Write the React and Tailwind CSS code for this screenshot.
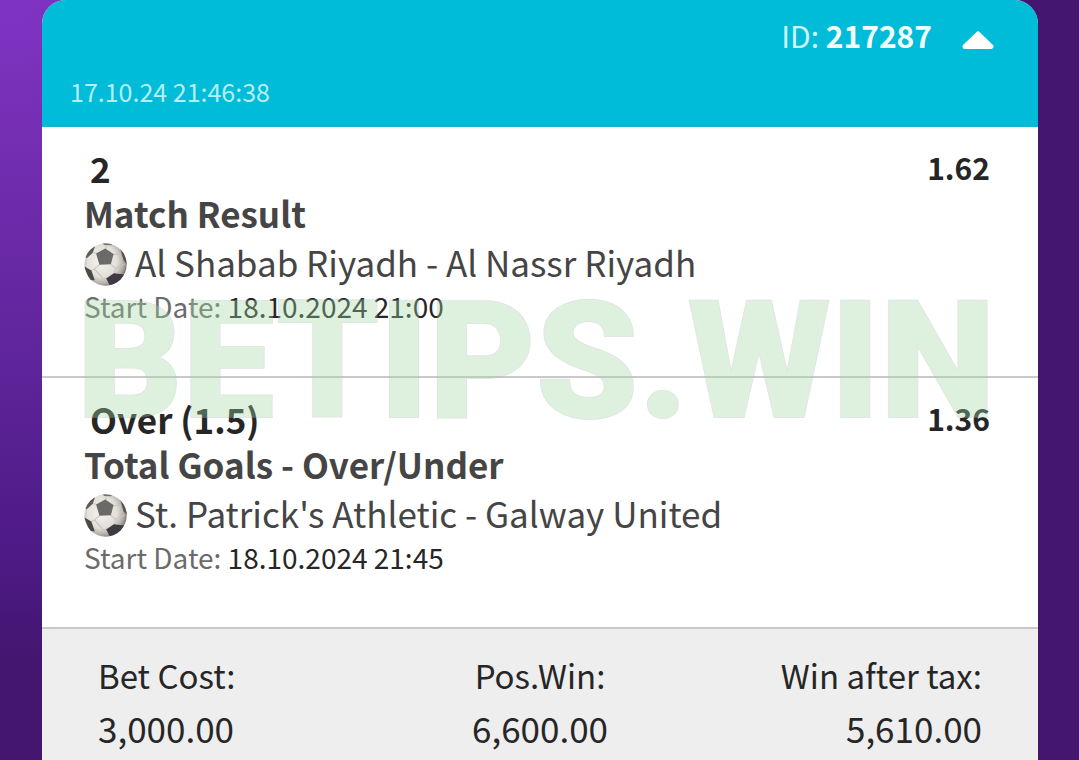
import { useId, useState } from "react";

const bets = [
    {
        pick: "2",
        market: "Match Result",
        teams: "Al Shabab Riyadh - Al Nassr Riyadh",
        startDate: "18.10.2024 21:00",
        odds: "1.62",
    },
    {
        pick: "Over (1.5)",
        market: "Total Goals - Over/Under",
        teams: "St. Patrick's Athletic - Galway United",
        startDate: "18.10.2024 21:45",
        odds: "1.36",
    },
];

const totals = [
    { label: "Bet Cost:", value: "3,000.00", align: "text-left" },
    { label: "Pos.Win:", value: "6,600.00", align: "text-center" },
    { label: "Win after tax:", value: "5,610.00", align: "text-right" },
];

function SoccerBall() {
    const id = useId();

    return (
        <svg className="w-[43px] h-[43px] mb-0.5 shrink-0" viewBox="27 21 128 128" aria-hidden="true">
            <defs>
                <radialGradient id={`${id}-shade`} cx="0.4" cy="0.42" r="0.62">
                    <stop offset="0" stopColor="#f6f4ef" />
                    <stop offset="0.6" stopColor="#e2dfda" />
                    <stop offset="0.85" stopColor="#b3aca6" />
                    <stop offset="1" stopColor="#77706c" />
                </radialGradient>
                <clipPath id={`${id}-clip`}>
                    <circle cx="91" cy="85" r="63" />
                </clipPath>
            </defs>
            <g clipPath={`url(#${id}-clip)`}>
                <rect x="27" y="21" width="128" height="128" fill={`url(#${id}-shade)`} />
                {/* Seams */}
                <g fill="none" stroke="#c9c4bd" strokeWidth="3">
                    <path d="M67 52L52 49M91 41L94 24M111 56L138 53M105 82L120 96L118 114M75 84L58 98L48 104M120 96L148 84M58 98L84 128L98 126M34 64L32 98" />
                </g>
                {/* Patches */}
                <path d="M63 52L90 37L115 54L107 84L73 86Z" fill="#6b6a68" />
                <path d="M24 62L36 38L60 31L53 50L36 66Z" fill="#5e5c55" />
                <path d="M80 19L118 19L108 28L87 27Z" fill="#77756f" />
                <path d="M27 90L49 103L59 132L44 132Z" fill="#4b4a44" />
                <path d="M93 127L116 111L147 115L132 142L106 151Z" fill="#3f3a42" />
                <path d="M134 34L152 50L158 88L145 72L139 53Z" fill="#55504e" />
            </g>
        </svg>
    );
}

function BetRow({ bet }) {
    return (
        <li className="flex items-start justify-between pt-[18px] pb-[51px] pl-[42px] pr-12 border-b-2 border-[#c9c9c9]">
            <div>
                <p className="pl-1.5 text-[35px] leading-[45px] font-bold text-[#262626]">{bet.pick}</p>
                <h2 className="text-[35px] leading-[45px] font-bold text-[#454545]">{bet.market}</h2>
                <div className="flex items-end gap-2">
                    <SoccerBall />
                    <span className="text-[35px] leading-[53px] text-[#454545]">{bet.teams}</span>
                </div>
                <p className="text-[28px] leading-[37px] text-[#262626]">
                    <span className="text-[#6b6b6b]">Start Date:</span> {bet.startDate}
                </p>
            </div>
            <span className="text-[30px] leading-[45px] font-bold text-[#262626]">{bet.odds}</span>
        </li>
    );
}

export default function App() {
    const [open, setOpen] = useState(true);

    return (
        <div className="min-h-screen flex pl-[42px] pr-[41px] bg-[#441670] bg-[radial-gradient(ellipse_1030px_660px_at_0_0,#8034c3,#6829a4_40%,#4e1b87_82%,#441670)] font-['Noto_Sans_CJK_SC',sans-serif]">
            <main className="flex-1 flex flex-col rounded-t-3xl overflow-hidden bg-[#eeeeee]">
                <header className="h-[127px] pt-[13px] pl-7 pr-11 bg-[#00bcd8] border-b border-[#18b3ca]">
                    <div className="flex items-center justify-end gap-[30px]">
                        <span className="text-[30px] leading-[45px] text-[#cff6fb]">
                            ID: <b className="font-bold text-[#f2ffff]">217287</b>
                        </span>
                        <button
                            type="button"
                            aria-label="Toggle bet details"
                            aria-expanded={open}
                            onClick={() => setOpen(!open)}
                            className="pt-2.5"
                        >
                            <svg className="w-8 h-[19px]" viewBox="0 0 32 19" aria-hidden="true">
                                <path d="M16 3L29 15.5H3Z" fill="#fff" stroke="#fff" strokeWidth="5" strokeLinejoin="round" />
                            </svg>
                        </button>
                    </div>
                    <time className="block mt-[15px] text-[25px] leading-[37px] text-[#b5eef6]">17.10.24 21:46:38</time>
                </header>

                {open && (
                    <section className="relative bg-white">
                        <ul>
                            {bets.map((bet) => (
                                <BetRow key={bet.market} bet={bet} />
                            ))}
                        </ul>
                        {/* Watermark */}
                        <div className="absolute inset-x-0 top-[136px] pr-2 text-center whitespace-nowrap pointer-events-none font-['Roboto',sans-serif] font-black text-[164px] leading-[196px] text-[#a3daa6] opacity-35 [-webkit-text-stroke:2px_#a9b8aa] [paint-order:stroke_fill]">
                            BETIPS.WIN
                        </div>
                    </section>
                )}

                <footer className="flex-1 grid grid-cols-3 content-start pt-5 px-14">
                    {totals.map((total) => (
                        <div key={total.label} className={total.align}>
                            <p className="text-[33px] leading-[53px] text-[#262626]">{total.label}</p>
                            <p className="text-[35px] leading-[51px] text-[#262626]">{total.value}</p>
                        </div>
                    ))}
                </footer>
            </main>
        </div>
    );
}
